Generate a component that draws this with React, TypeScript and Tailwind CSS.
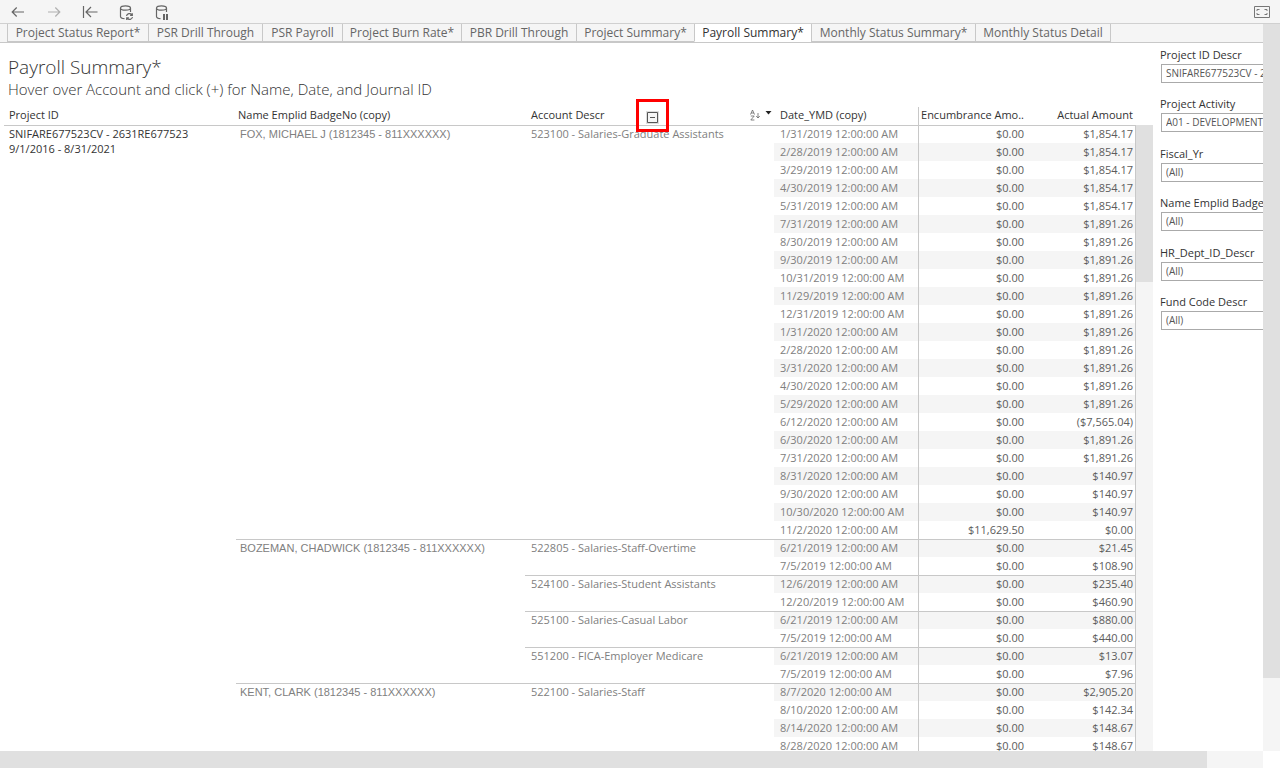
import React from 'react'

interface Entry {
  date: string
  encumbrance: string
  actual: string
}

interface AccountGroup {
  account: string
  entries: Entry[]
}

interface PersonGroup {
  name: string
  accounts: AccountGroup[]
}

const entry = (day: string, actual: string, encumbrance = '$0.00'): Entry => ({
  date: `${day} 12:00:00 AM`,
  encumbrance,
  actual,
})

const PEOPLE: PersonGroup[] = [
  {
    name: 'FOX, MICHAEL J (1812345 - 811XXXXXX)',
    accounts: [
      {
        account: '523100 - Salaries-Graduate Assistants',
        entries: [
          entry('1/31/2019', '$1,854.17'),
          entry('2/28/2019', '$1,854.17'),
          entry('3/29/2019', '$1,854.17'),
          entry('4/30/2019', '$1,854.17'),
          entry('5/31/2019', '$1,854.17'),
          entry('7/31/2019', '$1,891.26'),
          entry('8/30/2019', '$1,891.26'),
          entry('9/30/2019', '$1,891.26'),
          entry('10/31/2019', '$1,891.26'),
          entry('11/29/2019', '$1,891.26'),
          entry('12/31/2019', '$1,891.26'),
          entry('1/31/2020', '$1,891.26'),
          entry('2/28/2020', '$1,891.26'),
          entry('3/31/2020', '$1,891.26'),
          entry('4/30/2020', '$1,891.26'),
          entry('5/29/2020', '$1,891.26'),
          entry('6/12/2020', '($7,565.04)'),
          entry('6/30/2020', '$1,891.26'),
          entry('7/31/2020', '$1,891.26'),
          entry('8/31/2020', '$140.97'),
          entry('9/30/2020', '$140.97'),
          entry('10/30/2020', '$140.97'),
          entry('11/2/2020', '$0.00', '$11,629.50'),
        ],
      },
    ],
  },
  {
    name: 'BOZEMAN, CHADWICK (1812345 - 811XXXXXX)',
    accounts: [
      {
        account: '522805 - Salaries-Staff-Overtime',
        entries: [entry('6/21/2019', '$21.45'), entry('7/5/2019', '$108.90')],
      },
      {
        account: '524100 - Salaries-Student Assistants',
        entries: [entry('12/6/2019', '$235.40'), entry('12/20/2019', '$460.90')],
      },
      {
        account: '525100 - Salaries-Casual Labor',
        entries: [entry('6/21/2019', '$880.00'), entry('7/5/2019', '$440.00')],
      },
      {
        account: '551200 - FICA-Employer Medicare',
        entries: [entry('6/21/2019', '$13.07'), entry('7/5/2019', '$7.96')],
      },
    ],
  },
  {
    name: 'KENT, CLARK (1812345 - 811XXXXXX)',
    accounts: [
      {
        account: '522100 - Salaries-Staff',
        entries: [
          entry('8/7/2020', '$2,905.20'),
          entry('8/10/2020', '$142.34'),
          entry('8/14/2020', '$148.67'),
          entry('8/28/2020', '$148.67'),
        ],
      },
    ],
  },
]

const TABS = [
  { label: 'Project Status Report*', width: 'w-[141px]' },
  { label: 'PSR Drill Through', width: 'w-[114px]' },
  { label: 'PSR Payroll', width: 'w-[80px]' },
  { label: 'Project Burn Rate*', width: 'w-[119px]' },
  { label: 'PBR Drill Through', width: 'w-[115px]' },
  { label: 'Project Summary*', width: 'w-[118px]' },
  { label: 'Payroll Summary*', width: 'w-[117px]' },
  { label: 'Monthly Status Summary*', width: 'w-[164px]' },
  { label: 'Monthly Status Detail', width: 'w-[136px]' },
]

const ACTIVE_TAB = 'Payroll Summary*'

const FILTERS = [
  { id: 'project-id', label: 'Project ID Descr', value: 'SNIFARE677523CV - 2631RE677523' },
  { id: 'activity', label: 'Project Activity', value: 'A01 - DEVELOPMENT' },
  { id: 'fiscal-year', label: 'Fiscal_Yr', value: '(All)' },
  { id: 'badge', label: 'Name Emplid BadgeNo', value: '(All)' },
  { id: 'dept', label: 'HR_Dept_ID_Descr', value: '(All)' },
  { id: 'fund', label: 'Fund Code Descr', value: '(All)' },
]

const countEntries = (groups: AccountGroup[]) => groups.reduce((sum, g) => sum + g.entries.length, 0)

const TOTAL_ROWS = PEOPLE.reduce((sum, p) => sum + countEntries(p.accounts), 0)

// Flat list of rows; the first row of each group also carries the group cells
const ROWS = PEOPLE.flatMap((person) =>
  person.accounts.flatMap((group, groupIndex) =>
    group.entries.map((item, i) => ({
      item,
      group: i === 0 ? group : null,
      person: i === 0 && groupIndex === 0 ? person : null,
    })),
  ),
)

const DatabaseOutline = () => (
  <path d="M4.500 6c0-1.300 2-2.200 5-2.200s5 .9 5 2.200-2 2.200-5 2.200-5-.9-5-2.200v8.500c0 1.200 1.500 2 4 2.200M14.500 6v4" />
)

interface ToolButtonProps {
  label: string
  faded?: boolean
  children: React.ReactNode
}

const ToolButton: React.FC<ToolButtonProps> = ({ label, faded, children }) => (
  <button
    type="button"
    aria-label={label}
    className={`flex h-full w-9 items-center justify-center ${faded ? 'text-[#b0b0b0]' : 'text-[#666]'}`}
  >
    <svg width="20" height="20" viewBox="0 0 20 20" fill="none" stroke="currentColor" strokeWidth="1.2">
      {children}
    </svg>
  </button>
)

const Toolbar = () => (
  <header className="flex h-6 shrink-0 items-stretch border-b border-[#d0d0d0] bg-[#f5f5f5]">
    <ToolButton label="Undo">
      <path d="M16 10H4.500M8.700 5.500L4.200 10l4.500 4.500" />
    </ToolButton>
    <ToolButton label="Redo" faded>
      <path d="M4 10h11.500M11.300 5.500l4.500 4.500-4.500 4.500" />
    </ToolButton>
    <ToolButton label="Revert">
      <path d="M3.500 4v12M17.500 10H6.500M11 5l-5 5 5 5" />
    </ToolButton>
    <ToolButton label="Refresh">
      <DatabaseOutline />
      <path d="M10.500 14a3 3 0 0 1 5.300-1.300M16.300 11.200v2.200h-2.200M16.500 15a3 3 0 0 1-5.300 1.300M10.700 18v-2.200h2.200" />
    </ToolButton>
    <ToolButton label="Pause">
      <DatabaseOutline />
      <path d="M12 12v6M15 12v6" strokeWidth="2" />
    </ToolButton>
    <button type="button" aria-label="Full screen" className="ml-auto w-9 text-[#777]">
      <svg className="mx-auto" width="18" height="14" viewBox="0 0 18 14" fill="none" stroke="currentColor">
        <path d="M1.500 1.500h15v11h-15z" />
        <path d="M4 6V4.500h2.500M11.500 4.500H14V6M14 8v1.500h-2.500M6.500 9.500H4V8" />
      </svg>
    </button>
  </header>
)

const SheetTabs = () => (
  <nav className="flex h-[19px] shrink-0 border-b border-[#c8c8c8] bg-[#f5f5f5] pl-[7px]">
    {TABS.map(({ label, width }) => (
      <button
        key={label}
        type="button"
        className={`${width} h-[18px] shrink-0 border-b border-l border-l-[#c8c8c8] text-center text-xs leading-[17px] whitespace-nowrap last:border-r last:border-r-[#c8c8c8] ${
          label === ACTIVE_TAB ? 'border-b-white bg-white text-[#333]' : 'border-b-[#c8c8c8] text-[#666]'
        }`}
      >
        {label}
      </button>
    ))}
  </nav>
)

const SortIcon = () => (
  <svg width="22" height="12" viewBox="0 0 22 12" fill="none" stroke="#666" strokeWidth="0.8">
    <path d="M.5 5.500L2.500 1l2 4.500M1.200 4h2.600M.8 7h3.400L.8 11h3.600M8 4v5M6.200 7L8 9l1.800-2" />
    <path d="M15.500 2h6l-3 3.500z" fill="#222" stroke="none" />
  </svg>
)

const PayrollTable = () => (
  <table className="w-full table-fixed border-separate border-spacing-0 text-[11px] leading-[17px] whitespace-nowrap">
    <colgroup>
      <col className="w-[232px]" />
      <col className="w-[289px]" />
      <col />
      <col className="w-[144px]" />
      <col className="w-[111px]" />
      <col className="w-[107px]" />
    </colgroup>
    <thead>
      <tr className="h-[18px] text-left align-top leading-4 text-[#333] *:p-0 *:font-normal">
        <th><div className="pl-[5px]">Project ID</div></th>
        <th><div className="pl-0.5">Name Emplid BadgeNo (copy)</div></th>
        <th className="relative">
          <div className="flex items-center justify-between pr-0.5 pl-1.5">
            Account Descr
            <SortIcon />
          </div>
          {/* Collapse control with its highlight frame */}
          <div className="absolute -top-2 left-[111px] flex size-[33px] items-center justify-center border-3 border-[#f00]">
            <button type="button" aria-label="Collapse" className="mt-1 size-[13px] bg-[#ddd] p-px">
              <svg width="11" height="11" viewBox="0 0 11 11" fill="none" stroke="#555">
                <path d="M.5.5h10v10H.5z" fill="#f5f5f5" />
                <path d="M3 5.500h5" />
              </svg>
            </button>
          </div>
        </th>
        <th><div className="pl-1.5">Date_YMD (copy)</div></th>
        <th className="border-l border-[#c8c8c8]"><div className="pr-[5px] text-right">Encumbrance Amo..</div></th>
        <th><div className="pr-[3px] text-right">Actual Amount</div></th>
      </tr>
    </thead>
    <tbody className="align-top text-[#808080] *:*:p-0">
      {ROWS.map(({ item, group, person }, i) => {
        const rule = group ? 'border-t border-t-[#c8c8c8] leading-[15px]' : ''
        const shade = i % 2 === 1 ? 'bg-[#f5f5f5]' : ''
        return (
          <tr key={i} className="h-[18px]">
            {i === 0 && (
              <td rowSpan={TOTAL_ROWS} className="border-t border-[#c8c8c8] leading-[15px] text-[#333]">
                <div className="pl-[5px]">
                  SNIFARE677523CV - 2631RE677523
                  <br />
                  9/1/2016 - 8/31/2021
                </div>
              </td>
            )}
            {person && (
              <td
                rowSpan={countEntries(person.accounts)}
                className="border-t border-[#c8c8c8] font-['Liberation_Sans',Arial,sans-serif]"
              >
                <div className="pl-1">{person.name}</div>
              </td>
            )}
            {group && (
              <td rowSpan={group.entries.length} className={rule}>
                <div className="pl-1.5">{group.account}</div>
              </td>
            )}
            <td className={`${rule} ${shade}`}>
              <div className="pl-1.5">{item.date}</div>
            </td>
            <td className={`${rule} ${shade} border-l border-l-[#c8c8c8] text-right text-[#5c5c5c]`}>
              <div className="pr-[5px]">{item.encumbrance}</div>
            </td>
            <td className={`${rule} ${shade} border-r border-r-[#c8c8c8] text-right text-[#5c5c5c]`}>
              <div className="pr-0.5">{item.actual}</div>
            </td>
          </tr>
        )
      })}
    </tbody>
  </table>
)

const FilterPanel = () => (
  <aside className="flex w-[110px] shrink-0 flex-col gap-[13px] overflow-hidden pt-1 pl-[7px]">
    {FILTERS.map(({ id, label, value }) => (
      <div key={id} className="w-40 shrink-0 whitespace-nowrap even:mb-px">
        <label htmlFor={id} className="block pb-0.5 text-[11px] leading-[15px] text-[#333]">
          {label}
        </label>
        <select
          id={id}
          className="ml-px block h-[19px] w-full appearance-none border border-[#aaa] bg-white px-1 text-[10px] text-[#555]"
        >
          <option>{value}</option>
        </select>
      </div>
    ))}
  </aside>
)

export default function App() {
  return (
    <div className="flex h-screen flex-col overflow-hidden bg-white font-['Open_Sans','Noto_Sans',sans-serif]">
      <Toolbar />
      <div className="flex min-h-0 flex-1">
        <div className="flex min-w-0 flex-1 flex-col">
          <SheetTabs />
          <div className="flex min-h-0 flex-1">
            <main className="flex min-w-0 flex-1 flex-col overflow-hidden">
              <div className="shrink-0 px-2 pt-3 font-light text-[#333]">
                <h1 className="text-[19px] leading-6">Payroll Summary*</h1>
                <h2 className="text-[15px] leading-5">
                  Hover over Account and click (+) for Name, Date, and Journal ID
                </h2>
              </div>
              <div className="flex min-h-0 flex-1 pt-2">
                <div className="min-w-0 flex-1 pl-1">
                  <PayrollTable />
                </div>
                <div className="mt-[18px] w-[17px] bg-[#f5f5f5]">
                  <div className="h-1/4 bg-[#e0e0e0]" />
                </div>
              </div>
            </main>
            <FilterPanel />
          </div>
        </div>
        <div className="w-[17px] shrink-0 bg-[#f5f5f5]">
          <div className="h-9/10 bg-[#e0e0e0]" />
        </div>
      </div>
      <div className="z-10 flex h-[17px] shrink-0 bg-[#f5f5f5]">
        <div className="min-w-0 flex-1">
          <div className="h-full w-[95.6%] bg-[#e0e0e0]" />
        </div>
        <div className="w-[17px] bg-white" />
      </div>
    </div>
  )
}
